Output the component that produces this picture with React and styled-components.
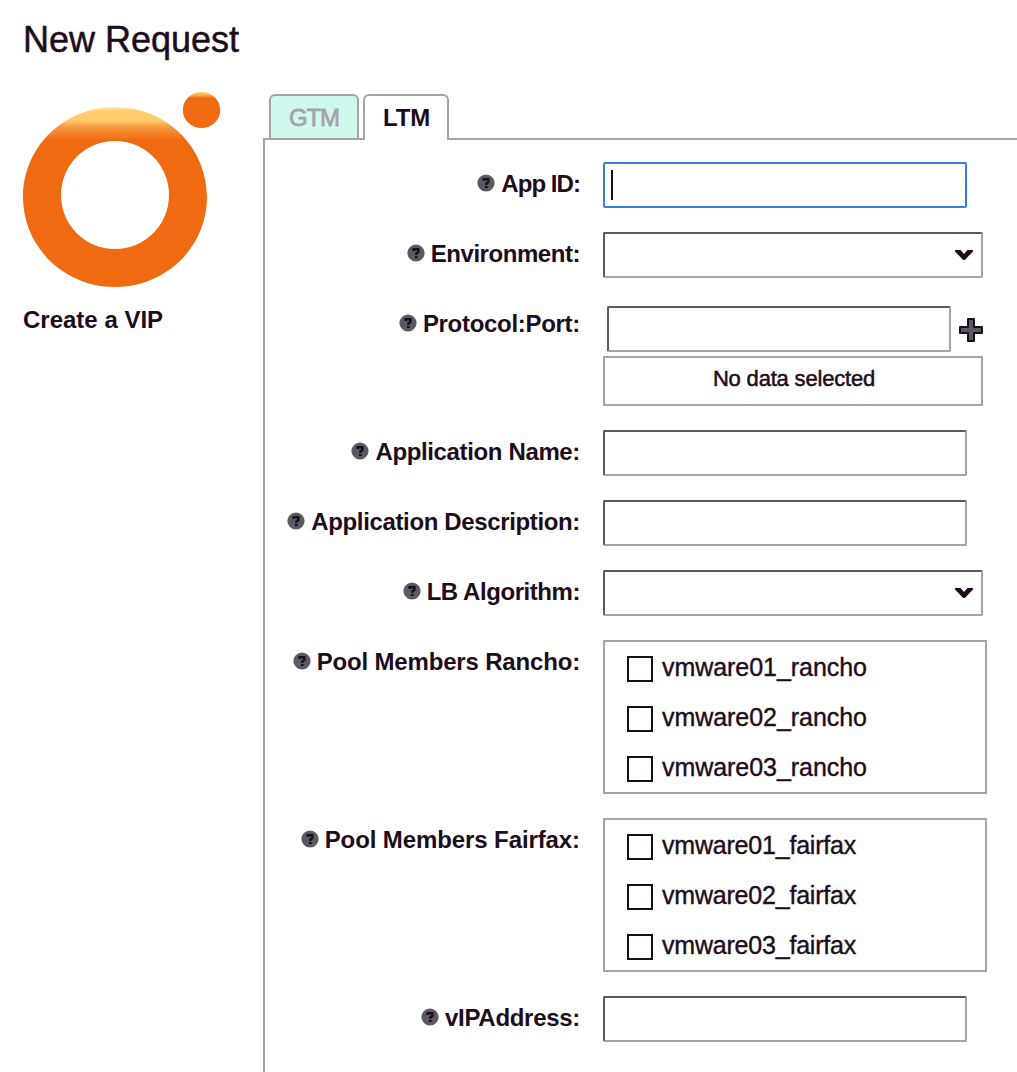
import React from "react";
import styled, { createGlobalStyle } from "styled-components";

const ink = "#1d0d1c";
const dark = "#5b5a62";
const line = "#a4a4a4";

const GlobalStyle = createGlobalStyle`
  * { box-sizing: border-box; }
  html, body { margin: 0; background: #fff; overflow: hidden; }
  body { font-family: "Liberation Sans", Arial, sans-serif; color: ${ink}; }
`;

const Page = styled.div`
  width: 1017px;
  height: 1072px;
  display: flex;
  flex-direction: column;
  overflow: hidden;
  background: #fff;
`;

const Title = styled.h1`
  margin: 0;
  height: 92px;
  padding: 19px 0 0 23px;
  font-size: 36px;
  line-height: 41px;
  font-weight: 400;
  -webkit-text-stroke: 0.5px ${ink};
`;

const Main = styled.main`
  display: flex;
  flex: 1;
`;

const Sidebar = styled.aside`
  width: 263px;
  flex: none;
  padding-left: 22px;
`;

const Logo = styled.svg`
  display: block;
  width: 200px;
  height: 196px;
`;

const Caption = styled.div`
  margin-top: 18px;
  padding-left: 1px;
  font-size: 24px;
  line-height: 28px;
  font-weight: 700;
`;

const Content = styled.section`
  flex: 1;
  min-width: 0;
  display: flex;
  flex-direction: column;
`;

const Tabs = styled.nav`
  display: flex;
  gap: 4px;
  padding: 2px 0 0 6px;
`;

const Tab = styled.div`
  width: ${(p) => p.$width}px;
  height: ${(p) => (p.$active ? 46 : 44)}px;
  margin-bottom: ${(p) => (p.$active ? -2 : 0)}px;
  border: 2px solid ${line};
  border-bottom: 0;
  border-radius: 6px 6px 0 0;
  background: ${(p) =>
    p.$active
      ? "#fff"
      : "repeating-conic-gradient(#c6f1e6 0 25%, #eafaf5 0 50%) 0 0 / 2px 2px"};
  color: ${(p) => (p.$active ? ink : line)};
  padding: 8px 0 0 18px;
  font-size: 24px;
  line-height: 28px;
  font-weight: ${(p) => (p.$active ? 700 : 400)};
  -webkit-text-stroke: ${(p) => (p.$active ? 0 : 0.8)}px ${line};
  letter-spacing: ${(p) => p.$track || 0}px;
  position: relative;
`;

const Panel = styled.form`
  flex: 1;
  border-top: 2px solid ${line};
  border-left: 2px solid ${line};
  padding-top: 22px;
  display: flex;
  flex-direction: column;
  gap: 24px;
`;

const Row = styled.div`
  display: grid;
  grid-template-columns: 315px 1fr;
  column-gap: 23px;
  align-items: start;
`;

const Label = styled.label`
  display: flex;
  justify-content: flex-end;
  align-items: flex-start;
  gap: 6px;
  padding-top: 8px;
  font-size: 24px;
  line-height: 28px;
  font-weight: 700;
  white-space: nowrap;
`;

const LabelText = styled.span`
  letter-spacing: ${(p) => p.$track}px;
`;

const HelpIcon = styled.svg`
  width: 18px;
  height: 18px;
  margin-top: 4px;
  flex: none;
`;

const Field = styled.div`
  display: flex;
  align-items: center;
  justify-content: ${(p) => (p.$select ? "flex-end" : "flex-start")};
  width: ${(p) => p.$width}px;
  height: 46px;
  padding: 0 ${(p) => (p.$select ? 8 : 6)}px;
  border: 2px solid;
  border-color: ${(p) =>
    p.$focused ? "#377fdd" : `${dark} ${line} ${line} ${dark}`};
  border-radius: 2px;
  background: #fff;
`;

const Caret = styled.span`
  width: 2px;
  height: 30px;
  background: ${ink};
`;

const Chevron = styled.svg`
  width: 18px;
  height: 10px;
`;

const PortEditor = styled.div`
  display: flex;
  flex-direction: column;
  gap: 4px;
  padding-top: 4px;
`;

const PortLine = styled.div`
  display: flex;
  align-items: center;
  gap: 8px;
  padding-left: 4px;
`;

const PlusIcon = styled.svg`
  width: 24px;
  height: 24px;
  margin-top: 2px;
`;

const EmptyBox = styled.div`
  width: 380px;
  height: 50px;
  padding: 8px 0 0 2px;
  border: 2px solid ${line};
  text-align: center;
  font-size: 22px;
  line-height: 26px;
  letter-spacing: -0.18px;
  -webkit-text-stroke: 0.5px ${ink};
`;

const Options = styled.div`
  width: 384px;
  height: 154px;
  padding: 14px 0 0 22px;
  border: 2px solid ${line};
  display: flex;
  flex-direction: column;
  gap: 24px;
`;

const Option = styled.div`
  display: flex;
  align-items: center;
  gap: 9px;
  height: 26px;
`;

const Checkbox = styled.span`
  width: 26px;
  height: 26px;
  flex: none;
  border: 2px solid ${ink};
`;

const OptionText = styled.span`
  font-size: 25px;
  line-height: 28px;
  margin-top: -5px;
  letter-spacing: ${(p) => p.$track}px;
  -webkit-text-stroke: 0.4px ${ink};
`;

function Help() {
  return (
    <HelpIcon viewBox="0 0 18 18">
      <circle cx="9" cy="9" r="8.6" fill={dark} />
      <path
        d="M6.6 7V5.2H11.4V8L9.4 9.4V11"
        fill="none"
        stroke={ink}
        strokeWidth="2.4"
      />
      <rect x="8" y="12" width="2.6" height="2" fill={ink} />
    </HelpIcon>
  );
}

function Select() {
  return (
    <Field $width={380} $select>
      <Chevron viewBox="0 0 18 10">
        <path d="M0 0H5.5L9 4L12.5 0H18V1.5L9.8 10H8.2L0 1.5Z" fill={ink} />
      </Chevron>
    </Field>
  );
}

function FormRow({ label, track, children }) {
  return (
    <Row>
      <Label>
        <Help />
        <LabelText $track={track}>{label}</LabelText>
      </Label>
      {children}
    </Row>
  );
}

function CheckList({ items, track }) {
  return (
    <Options>
      {items.map((item) => (
        <Option key={item}>
          <Checkbox />
          <OptionText $track={track}>{item}</OptionText>
        </Option>
      ))}
    </Options>
  );
}

export default function App() {
  return (
    <Page>
      <GlobalStyle />
      <Title>New Request</Title>
      <Main>
        <Sidebar>
          <Logo viewBox="22 92 200 196">
            <defs>
              <linearGradient id="ring" gradientUnits="userSpaceOnUse" x1="0" y1="107" x2="0" y2="140">
                <stop offset="0" stopColor="#ffe9bd" />
                <stop offset="0.12" stopColor="#ffce70" />
                <stop offset="0.42" stopColor="#ffca6a" />
                <stop offset="0.6" stopColor="#f89b3f" />
                <stop offset="1" stopColor="#f06a12" />
              </linearGradient>
              <linearGradient id="dot" gradientUnits="userSpaceOnUse" x1="0" y1="92" x2="0" y2="98">
                <stop offset="0" stopColor="#ffce70" />
                <stop offset="0.5" stopColor="#fbb255" />
                <stop offset="1" stopColor="#f06a12" />
              </linearGradient>
            </defs>
            <path
              fill="url(#ring)"
              fillRule="evenodd"
              d="M115 107C166 107 207 147 207 197S166 287 115 287S23 247 23 197S64 107 115 107ZM115 141A54 54 0 1 0 115 249A54 54 0 1 0 115 141Z"
            />
            <ellipse cx="201.5" cy="110" rx="18.7" ry="18" fill="url(#dot)" />
          </Logo>
          <Caption>Create a VIP</Caption>
        </Sidebar>
        <Content>
          <Tabs>
            <Tab $width={90} $track={-1.2}>GTM</Tab>
            <Tab $width={86} $active $track={-0.2}>LTM</Tab>
          </Tabs>
          <Panel>
            <FormRow label="App ID:" track={-0.95}>
              <Field $width={364} $focused>
                <Caret />
              </Field>
            </FormRow>
            <FormRow label="Environment:" track={-0.45}>
              <Select />
            </FormRow>
            <FormRow label="Protocol:Port:" track={-0.3}>
              <PortEditor>
                <PortLine>
                  <Field $width={344} />
                  <PlusIcon viewBox="0 0 24 24">
                    <path
                      d="M9 1H15V9H23V15H15V23H9V15H1V9H9Z"
                      fill={dark}
                      stroke={ink}
                      strokeWidth="2"
                      strokeLinejoin="round"
                    />
                  </PlusIcon>
                </PortLine>
                <EmptyBox>No data selected</EmptyBox>
              </PortEditor>
            </FormRow>
            <FormRow label="Application Name:" track={-0.36}>
              <Field $width={364} />
            </FormRow>
            <FormRow label="Application Description:" track={-0.36}>
              <Field $width={364} />
            </FormRow>
            <FormRow label="LB Algorithm:" track={-0.44}>
              <Select />
            </FormRow>
            <FormRow label="Pool Members Rancho:" track={-0.17}>
              <CheckList
                track={-0.05}
                items={["vmware01_rancho", "vmware02_rancho", "vmware03_rancho"]}
              />
            </FormRow>
            <FormRow label="Pool Members Fairfax:" track={-0.1}>
              <CheckList
                track={-0.2}
                items={["vmware01_fairfax", "vmware02_fairfax", "vmware03_fairfax"]}
              />
            </FormRow>
            <FormRow label="vIPAddress:" track={-0.3}>
              <Field $width={364} />
            </FormRow>
          </Panel>
        </Content>
      </Main>
    </Page>
  );
}
